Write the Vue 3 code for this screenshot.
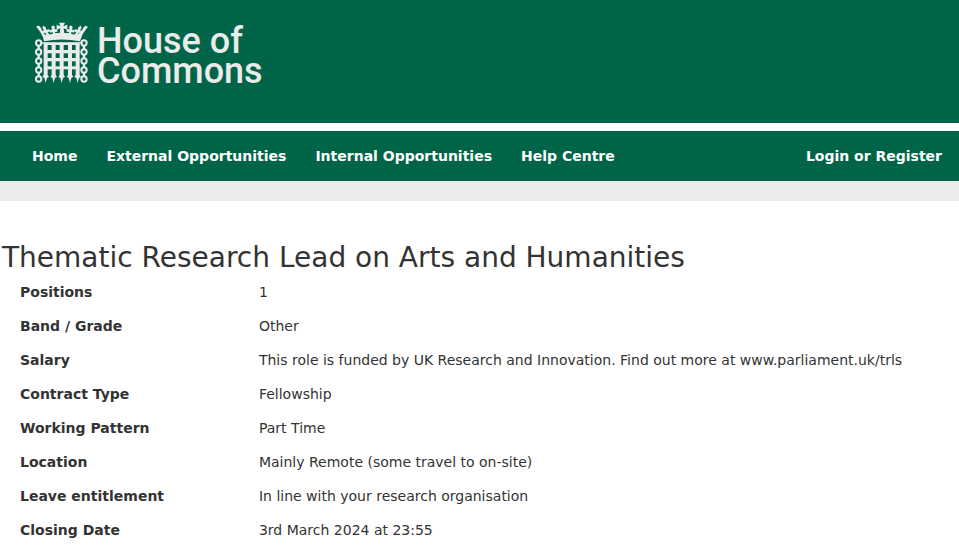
<script setup>
const navLinks = ['Home', 'External Opportunities', 'Internal Opportunities', 'Help Centre']

const details = [
  ['Positions', '1'],
  ['Band / Grade', 'Other'],
  ['Salary', 'This role is funded by UK Research and Innovation. Find out more at www.parliament.uk/trls'],
  ['Contract Type', 'Fellowship'],
  ['Working Pattern', 'Part Time'],
  ['Location', 'Mainly Remote (some travel to on-site)'],
  ['Leave entitlement', 'In line with your research organisation'],
  ['Closing Date', '3rd March 2024 at 23:55'],
]

const barX = [47, 71, 95, 120, 143]
const linkY = [84, 111, 138, 165, 192]
</script>

<template>
  <div class="page">
    <header class="banner">
      <a class="logo" href="#">
        <svg class="emblem" viewBox="12 18 168 189" aria-hidden="true">
          <g fill="#ebebeb">
            <!-- crown: band, side leaves and centre cross -->
            <path d="M42 79 Q39 60 24 42 L18 34 L27 32 L33 39 L36 48 Q43 60 51 61 L54 60 Q95 47 137 60 L141 60 Q149 56 156 46 L160 38 L166 32 L174 35 L168 43 Q154 60 150 79 Q95 68 42 79Z" />
            <path d="M52 66 L46 53 L37 55 L35 48 L42 46 L37 38 L40 32 L47 37 L49 45 L57 42 L60 49 L53 52 L62 63Z" />
            <path d="M140 66 L146 53 L155 55 L157 48 L150 46 L155 38 L152 32 L145 37 L143 45 L135 42 L132 49 L139 52 L130 63Z" />
            <path d="M69 62 L68 51 L60 53 L58 45 L66 44 L64 35 L70 31 L75 36 L73 43 L82 43 L82 50 L74 51 L80 60Z" />
            <path d="M123 62 L124 51 L132 53 L134 45 L126 44 L128 35 L122 31 L117 36 L119 43 L110 43 L110 50 L118 51 L112 60Z" />
            <path d="M87 23 H105 L100 34 L112 29 V44 L101 40 L103 60 H89 L91 40 L80 44 V29 L92 34Z" />
            <!-- portcullis bars -->
            <rect x="32" y="82" width="127" height="4" />
            <rect x="42" y="83" width="106" height="7" />
            <rect x="42" y="105" width="106" height="10" />
            <rect x="42" y="129" width="106" height="10" />
            <rect x="42" y="154" width="106" height="9" />
            <path v-for="x in barX" :key="x" :d="`M${x - 6} 83h12v97l4 5l-6 4l-4 15l-4 -15l-6 -4l4 -5z`" />
          </g>
          <g fill="none" stroke="#ebebeb" stroke-width="6">
            <template v-for="y in linkY" :key="y">
              <ellipse cx="26" :cy="y" rx="8" ry="8" />
              <ellipse cx="162" :cy="y" rx="8" ry="8" />
            </template>
            <path d="M26 92v92M162 92v92" stroke-width="7" stroke-dasharray="11 16" />
          </g>
        </svg>
        <span class="wordmark"><span>House of</span><span>Commons</span></span>
      </a>
    </header>

    <nav class="menu">
      <ul>
        <li v-for="label in navLinks" :key="label"><a href="#">{{ label }}</a></li>
      </ul>
      <a class="login" href="#">Login or Register</a>
    </nav>

    <main>
      <h1>Thematic Research Lead on Arts and Humanities</h1>
      <dl>
        <div v-for="[term, value] in details" :key="term" class="row">
          <dt>{{ term }}</dt>
          <dd>{{ value }}</dd>
        </div>
      </dl>
    </main>
  </div>
</template>

<style>
body {
  background: #fff;
}
</style>

<style scoped>
.page {
  font-family: Verdana, "DejaVu Sans", sans-serif;
  font-size: 14px;
  line-height: 20px;
  color: #333;
}
a {
  color: inherit;
  text-decoration: none;
}
.banner {
  padding: 21px 34px 37px;
  background: #006548;
  border-bottom: 8px solid #fff;
}
.logo {
  display: inline-flex;
  align-items: flex-start;
  gap: 7px;
  color: #ebebeb;
  vertical-align: top;
}
.emblem {
  width: 56px;
  height: 63px;
  margin-bottom: 2px;
}
.wordmark {
  display: flex;
  flex-direction: column;
  padding-top: 5px;
  font: 500 36px/30px Roboto, sans-serif;
  white-space: nowrap;
}
.menu {
  display: flex;
  align-items: center;
  justify-content: space-between;
  padding: 15px 17px 15px 32px;
  background: #006548;
  border-bottom: 20px solid #ebebeb;
  color: #fff;
  font-weight: bold;
}
.menu ul {
  display: flex;
  gap: 29px;
  margin: 0;
  padding: 0;
  list-style: none;
}
main {
  padding-top: 37px;
}
h1 {
  margin: 0 2px;
  font-size: 28px;
  font-weight: normal;
  line-height: 40px;
}
dl {
  margin: 0;
  padding: 4px 20px;
}
.row {
  display: grid;
  grid-template-columns: 26% 1fr;
  margin-bottom: 14px;
}
dt {
  font-weight: bold;
}
dd {
  margin: 0;
}
</style>
